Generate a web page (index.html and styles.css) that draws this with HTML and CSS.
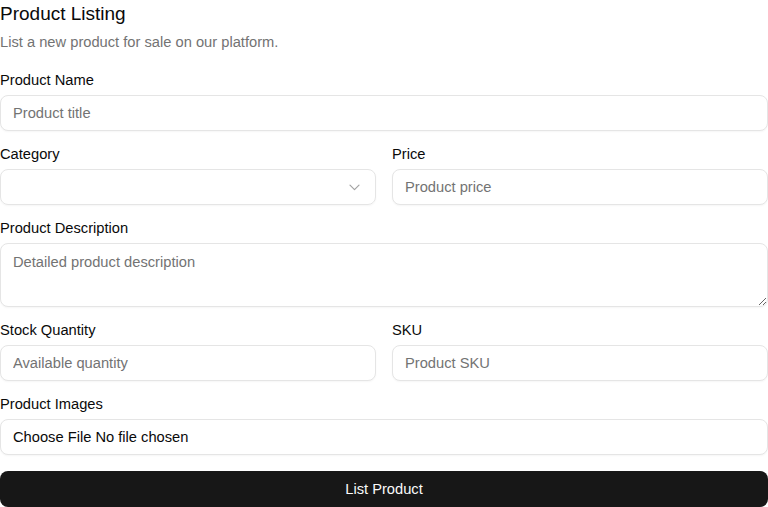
FILE: index.html
```html
<!DOCTYPE html>
<html lang="en">
<head>
<meta charset="utf-8">
<link rel="stylesheet" href="styles.css">
</head>
<body>
<div class="page">
  <h1 class="title">Product Listing</h1>
  <p class="subtitle">List a new product for sale on our platform.</p>
  <form class="form">
    <div class="field">
      <label class="label">Product Name</label>
      <input class="input" type="text" placeholder="Product title">
    </div>
    <div class="row">
      <div class="field">
        <label class="label">Category</label>
        <div class="select">
          <span class="select-value"></span>
          <svg class="chev" width="11" height="7" viewBox="0 0 11 7" fill="none" stroke="#a3a3a3" stroke-width="1.2" stroke-linecap="round" stroke-linejoin="round"><path d="M1 1.2 5.5 5.7 10 1.2"/></svg>
        </div>
      </div>
      <div class="field">
        <label class="label">Price</label>
        <input class="input" type="text" placeholder="Product price">
      </div>
    </div>
    <div class="field">
      <label class="label">Product Description</label>
      <textarea class="input textarea" placeholder="Detailed product description"></textarea>
    </div>
    <div class="row">
      <div class="field">
        <label class="label">Stock Quantity</label>
        <input class="input" type="text" placeholder="Available quantity">
      </div>
      <div class="field">
        <label class="label">SKU</label>
        <input class="input" type="text" placeholder="Product SKU">
      </div>
    </div>
    <div class="field">
      <label class="label">Product Images</label>
      <div class="input file"><span>Choose File</span><span>No file chosen</span></div>
    </div>
    <button class="btn" type="button">List Product</button>
  </form>
</div>
</body>
</html>
```

FILE: styles.css
```css
* { box-sizing: border-box; }
html, body { margin: 0; padding: 0; background: #fff; }
body {
  font-family: "Liberation Sans", Arial, sans-serif;
  color: #0a0a0a;
  font-size: 14.7px;
}
.page { width: 768px; }
.title {
  margin: 0;
  font-size: 19px;
  line-height: 28px;
  font-weight: 400;
}
.subtitle {
  margin: 4px 0 0;
  font-size: 14.7px;
  line-height: 20px;
  color: #737373;
}
.form {
  margin-top: 18px;
  display: flex;
  flex-direction: column;
  gap: 13px;
}
.field {
  display: flex;
  flex-direction: column;
  gap: 5px;
  min-width: 0;
}
.row {
  display: grid;
  grid-template-columns: 1fr 1fr;
  gap: 16px;
}
.label {
  font-size: 14.7px;
  line-height: 20px;
  color: #0a0a0a;
}
.input {
  height: 36px;
  width: 100%;
  border: 1px solid #e5e5e5;
  border-radius: 8px;
  padding: 0 12px;
  font-family: inherit;
  font-size: 14.7px;
  color: #0a0a0a;
  background: #fff;
  box-shadow: 0 1px 2px rgba(0,0,0,0.04);
  outline: none;
}
.input::placeholder { color: #737373; }
.textarea {
  height: 64px;
  padding: 8px 12px;
  line-height: 20px;
  resize: vertical;
  display: block;
}
.select {
  height: 36px;
  border: 1px solid #e5e5e5;
  border-radius: 8px;
  padding: 0 15px 0 12px;
  display: flex;
  align-items: center;
  justify-content: space-between;
  box-shadow: 0 1px 2px rgba(0,0,0,0.04);
}
.chev { display: block; }
.file {
  display: flex;
  align-items: center;
  gap: 4px;
}
.btn {
  margin-top: 3px;
  height: 36px;
  width: 100%;
  border: 0;
  border-radius: 8px;
  background: #171717;
  color: #fafafa;
  font-family: inherit;
  font-size: 14.7px;
}
```
